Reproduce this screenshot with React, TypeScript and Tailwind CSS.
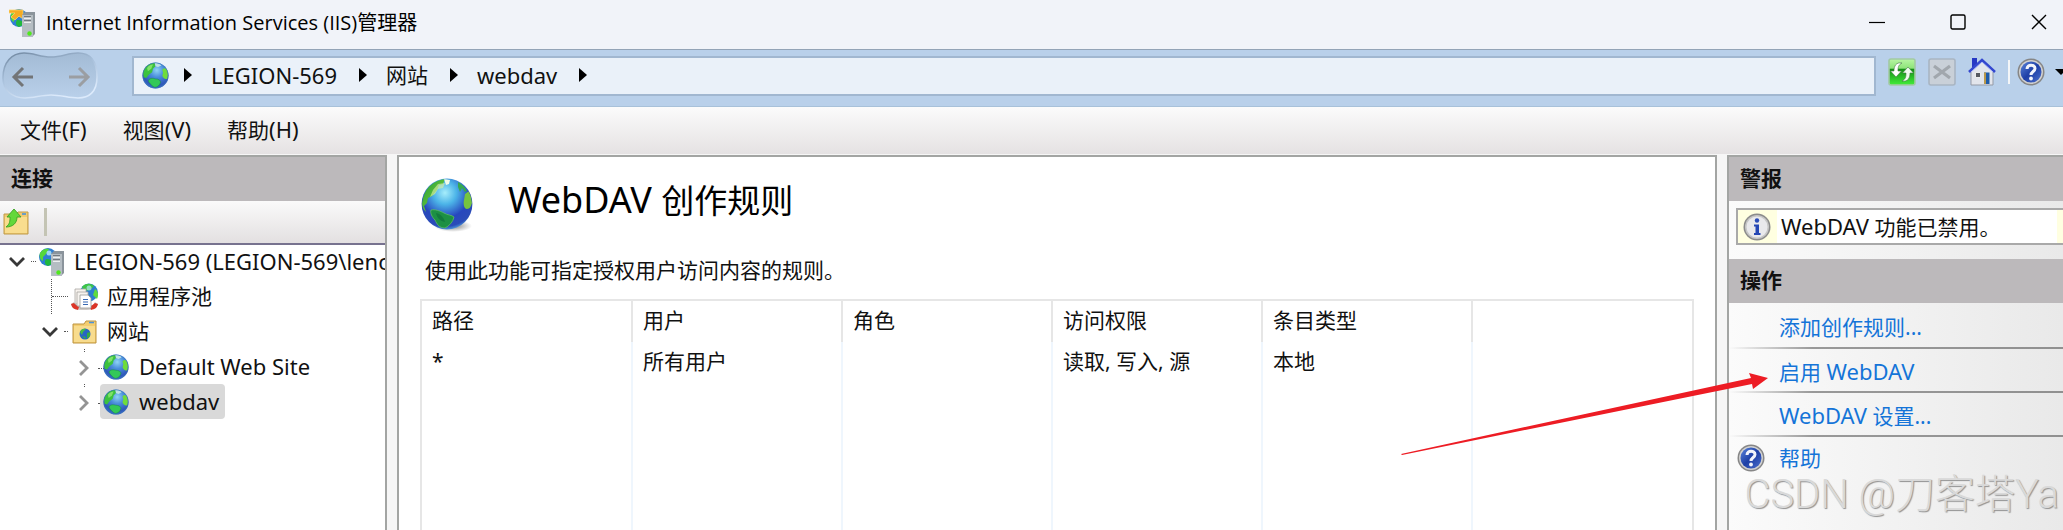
import React from 'react';

function Globe({ className = 'size-[26px]' }: { className?: string }) {
  return (
    <svg viewBox="0 0 32 32" className={className} aria-hidden="true">
      <defs>
        <radialGradient id="sea" cx=".55" cy=".3" r=".75">
          <stop offset="0" stopColor="#8fd4f4" />
          <stop offset=".35" stopColor="#4b8fdc" />
          <stop offset=".75" stopColor="#2f57ba" />
          <stop offset="1" stopColor="#3d7dcc" />
        </radialGradient>
        <clipPath id="disc"><circle cx="16" cy="16" r="15" /></clipPath>
      </defs>
      <circle cx="16" cy="16" r="15.500" fill="url(#sea)" />
      <g clipPath="url(#disc)">
        <path d="M1 12C2 5 8 1 15 1l1 4-3 3-1 4-4 3-3 4-3-1Z" fill="#3cc23e" />
        <path d="M6 7c2-3 5-4 7-4l-2 5-4 3Z" fill="#9df07c" opacity=".7" />
        <path d="M15 1c3 0 6 1 8 3l-4 2-3-1Z" fill="#d4f0e4" opacity=".8" />
        <path d="M24 9c2-2 4-2 6 0 1 4 1 8 0 11-3 1-5-1-6-4l1-3Z" fill="#6fdc3a" />
        <path d="M8 21c2-2 5-2 8-1 4 0 6 2 6 4-1 4-4 6-7 6-3-1-4-3-6-5-1-1-2-3-1-4Z" fill="#33c858" stroke="#178a48" strokeWidth=".6" />
      </g>
      <circle cx="16" cy="16" r="15" fill="none" stroke="#3b74b4" strokeWidth=".6" />
    </svg>
  );
}

function LargeGlobe() {
  return (
    <svg viewBox="0 0 52 54" className="h-[54px] w-[52px] shrink-0" aria-hidden="true">
      <defs>
        <radialGradient id="ocean" cx=".46" cy=".28" r=".75">
          <stop offset="0" stopColor="#a6edfb" />
          <stop offset=".3" stopColor="#4cb4e8" />
          <stop offset=".65" stopColor="#2747bd" />
          <stop offset=".88" stopColor="#2b4cb8" />
          <stop offset="1" stopColor="#58b4e6" />
        </radialGradient>
        <linearGradient id="land" x1="0" y1="0" x2="1" y2="1">
          <stop offset="0" stopColor="#1f9c3a" />
          <stop offset="1" stopColor="#8fd83a" />
        </linearGradient>
        <radialGradient id="shade">
          <stop offset="0" stopColor="#555" stopOpacity=".8" />
          <stop offset="1" stopColor="#777" stopOpacity="0" />
        </radialGradient>
        <clipPath id="ball"><circle cx="26" cy="26" r="25" /></clipPath>
      </defs>
      <ellipse cx="32" cy="48" rx="19" ry="6" fill="url(#shade)" />
      <circle cx="26" cy="26" r="25.400" fill="url(#ocean)" />
      <g clipPath="url(#ball)">
        <path d="M2 20C5 9 13 1 24 1l-2 5-4 1-2 5-5 6-4 2-1 5-3 3 2 6C1 30 0 26 2 20Z" fill="url(#land)" />
        <path d="m12 12 5-6 7-1-2 5-5 1-3 5-5 3Z" fill="#d6eea2" opacity=".65" />
        <path d="m23 1 6 1-1 4-3 1Z" fill="#f3fbe9" />
        <path d="M37 4c4 2 7 5 9 9l-2 1-3-4-2 4-2-5Z" fill="#35a950" />
        <path d="m44 16 4-3c2 3 3 7 3 12-1 3-2 6-5 6s-4-5-3-9Z" fill="#76c440" />
        <path d="M10 32c4-1 9 1 13 3 3 2 8 2 10 4-1 5-5 9-9 11-6 0-8-4-10-8-3-3-5-7-4-10Z" fill="#1d9044" stroke="#65c85c" strokeWidth=".7" />
        <path d="M15 35c5 1 8 5 9 9-5-1-8-4-9-9Z" fill="#0d6c38" opacity=".6" />
      </g>
    </svg>
  );
}

function Server({ badge = false }: { badge?: boolean }) {
  return (
    <svg viewBox="0 0 28 28" className="size-7 shrink-0" aria-hidden="true">
      <circle cx="10" cy="9" r="9" fill="#2f7fd3" />
      <path d="M2 5c2-4 7-5 9-4L8 6 5 9v4C2 12 1 8 2 5Z" fill="#55d83c" />
      <path d="M8 11c4 0 7 1 6 5l-4 2c-3-1-4-4-2-7Z" fill="#20b83e" />
      <circle cx="11" cy="5" r="2.500" fill="#b9ecfb" opacity=".8" />
      {badge && <path d="M0 1h14v9l-4-3-4 4-4-3 4-4H0Z" fill="#f5ab22" stroke="#fbd36b" strokeWidth=".8" />}
      <path d="m13 6 3-3h10v22l-3 3H13Z" fill="#8b949c" />
      <path d="M13 6h11v22H13Z" fill="#b5bdc3" />
      <path d="M15 9h7M15 13h7" stroke="#fff" strokeWidth="1.600" />
      <path d="M15 7.800h7M15 11.800h7" stroke="#555d64" strokeWidth="1" />
      <circle cx="20.500" cy="24.500" r="2.200" fill="#4fe81d" />
    </svg>
  );
}

function Pools() {
  return (
    <svg viewBox="0 0 28 28" className="size-7 shrink-0" aria-hidden="true">
      <circle cx="18" cy="9.500" r="9" fill="#2e7fd0" />
      <path d="M11 4c3-4 9-4 12-1l-4 4-6 1Z" fill="#3ec546" />
      <path d="M24 6c3 2 4 6 2 10l-4-4Z" fill="#5fda3e" />
      <circle cx="18" cy="5" r="2.500" fill="#b5e8ee" opacity=".7" />
      <path d="M0 21c1 5 5 6 13 6s13-2 14-6l-3-2-2 3H5l-2-3Z" fill="#cfcac6" />
      <path d="m0 21 3-1 5 4-1 3c-4-1-6-2-7-6ZM27 21l-3-1-5 4 1 3c4-1 6-2 7-6Z" fill="#dc3527" />
      <path d="M4 6h11v15H4Z" fill="#f7f3ee" stroke="#a9a6a2" strokeWidth=".8" />
      <path d="M6 9h11v14H6Z" fill="#f6f3ef" stroke="#a9a6a2" strokeWidth=".8" />
      <path d="M9 12h8l3 3v10H9Z" fill="#fff" stroke="#9a9a98" strokeWidth=".8" />
      <path d="M12 16.500h5M12 19h5M12 21.500h5" stroke="#3769b4" strokeWidth="1.200" />
    </svg>
  );
}

function SitesFolder() {
  return (
    <svg viewBox="0 0 28 28" className="size-7 shrink-0" aria-hidden="true">
      <path d="M2 6h11l2-3h10v22H2Z" fill="#f3cd70" stroke="#bd9440" strokeWidth="1" />
      <path d="M3 8h21v16H3Z" fill="#f8dc8e" />
      <path d="M18 4.500h5" stroke="#4a92db" strokeWidth="1.500" />
      <circle cx="14" cy="16" r="5.500" fill="#2765c4" />
      <path d="M9 14c1-3 4-4 6-3l-3 3-1 3Z" fill="#44bd44" />
      <path d="m16 15 3-1v4l-3 3Zm-5 3 4 1-1 2Z" fill="#36ad42" />
    </svg>
  );
}

function UpFolder() {
  return (
    <svg viewBox="0 0 28 28" className="size-7" aria-hidden="true">
      <path d="M2 6h12l2-2h10v22H2Z" fill="#f0ca70" stroke="#bf9a48" strokeWidth="1" />
      <path d="M3 9h22v16H3Z" fill="#f9dd8e" />
      <path d="M20 6h4" stroke="#4a92db" strokeWidth="1.600" />
      <path d="M4 19c4-3 4-6 4-10H5l7-8 7 8h-4c0 6-4 10-11 10Z" fill="#63d83a" stroke="#3ba322" strokeWidth=".9" />
    </svg>
  );
}

function Help() {
  return (
    <svg viewBox="0 0 28 28" className="size-7 shrink-0" aria-hidden="true">
      <defs>
        <linearGradient id="help" x1="0" y1="0" x2="1" y2="1">
          <stop offset="0" stopColor="#5d86dc" />
          <stop offset=".5" stopColor="#1d3fa6" />
          <stop offset="1" stopColor="#4d70cc" />
        </linearGradient>
      </defs>
      <circle cx="14" cy="14" r="13.500" fill="#868686" />
      <circle cx="14" cy="14" r="12" fill="#d0d0d0" />
      <circle cx="14" cy="14" r="10.500" fill="url(#help)" />
      <path d="M10 11c0-5 8-5 8-.5 0 3-4 3-4 6.500" fill="none" stroke="#f2f4fb" strokeWidth="3" />
      <circle cx="14" cy="20.500" r="1.900" fill="#f2f4fb" />
    </svg>
  );
}

function Info() {
  return (
    <svg viewBox="0 0 28 28" className="size-7 shrink-0" aria-hidden="true">
      <circle cx="14" cy="14" r="13.500" fill="#8b8b8b" />
      <circle cx="14" cy="14" r="12" fill="#c6c6c6" />
      <circle cx="14" cy="14" r="10.500" fill="#e9e9ec" />
      <circle cx="14" cy="7.500" r="2.200" fill="#2a4cb8" />
      <path d="M11 11.500h5V20h1.500v2h-6.500v-2h1.500v-6.500H11Z" fill="#2446b4" />
    </svg>
  );
}

const Chevron = ({ open }: { open?: boolean }) => (
  <svg viewBox="0 0 16 16" className="size-4 shrink-0" aria-hidden="true">
    {open ? (
      <path d="m1 4 7 7 7-7" fill="none" stroke="#383838" strokeWidth="2.800" />
    ) : (
      <path d="m4 1 7 7-7 7" fill="none" stroke="#949494" strokeWidth="2.800" />
    )}
  </svg>
);

const Dots = () => <span className="w-[6px] border-t border-dotted border-[#555]" />;

function Crumb({ children }: { children?: React.ReactNode }) {
  return (
    <span className="flex items-center gap-[19px]">
      <svg viewBox="0 0 8 14" className="h-[14px] w-2 shrink-0" aria-hidden="true">
        <path d="m0 0 8 7-8 7Z" fill="#000" />
      </svg>
      {children}
    </span>
  );
}

function PanelTitle({ children }: { children: React.ReactNode }) {
  return (
    <h2 className="flex h-11 shrink-0 items-center bg-[#bcb9bb] pb-[2px] pl-[11px] text-[21px] font-bold">{children}</h2>
  );
}

const columns = ['路径', '用户', '角色', '访问权限', '条目类型'];
const rule = ['*', '所有用户', '', '读取, 写入, 源', '本地'];
const Latin = ({ children }: { children: React.ReactNode }) => <span className="text-[22px]">{children}</span>;

export default function App() {
  const actions = [
    <>添加创作规则...</>,
    <>启用 <Latin>WebDAV</Latin></>,
    <><Latin>WebDAV</Latin> 设置...</>,
  ];
  return (
    <div className="relative flex h-screen flex-col overflow-hidden bg-[#f6f6f6] font-['Noto_Sans','Noto_Sans_CJK_SC',sans-serif] text-[21px] leading-7 text-[#111]">
      <header className="flex h-[50px] shrink-0 items-center justify-between border-b border-[#93a3b7] bg-[#f1f3f9] pr-4 pb-[4px] pl-[9px]">
        <div className="flex items-center gap-[9px]">
          <Server badge />
          <h1 className="font-['Open_Sans','Noto_Sans_CJK_SC',sans-serif] text-[20px] text-black">
            Internet Information Services (IIS)管理器
          </h1>
        </div>
        <div className="flex items-center gap-[65px] pb-[2px]">
          <button aria-label="最小化" className="size-4">
            <svg viewBox="0 0 16 16"><path d="M0 8.500h16" stroke="#000" strokeWidth="1.200" /></svg>
          </button>
          <button aria-label="最大化" className="size-4">
            <svg viewBox="0 0 16 16"><rect x="1" y="1" width="14" height="14" rx="1.500" fill="none" stroke="#000" strokeWidth="1.400" /></svg>
          </button>
          <button aria-label="关闭" className="size-4">
            <svg viewBox="0 0 16 16"><path d="m1 1 14 14M15 1 1 15" stroke="#000" strokeWidth="1.400" /></svg>
          </button>
        </div>
      </header>

      <div className="flex h-[57px] shrink-0 items-start overflow-hidden border-b border-[#a8c1d9] bg-[#b9d0ea] pt-[6px]">
        <div className="-mt-1 flex h-12 w-[132px] shrink-0">
          <svg viewBox="0 0 132 48" className="h-12 w-[132px]" aria-hidden="true">
            <defs>
              <linearGradient id="pill" x1="0" y1="0" x2="0" y2="1">
                <stop offset="0" stopColor="#a3bbd5" />
                <stop offset="1" stopColor="#b9d0ea" />
              </linearGradient>
              <linearGradient id="rim" x1="0" y1="0" x2=".5" y2="1">
                <stop offset="0" stopColor="#6f869f" />
                <stop offset=".5" stopColor="#a9c1dc" />
                <stop offset="1" stopColor="#dceafb" />
              </linearGradient>
            </defs>
            <path d="M3 26C3 10 12 1 24 1c10 0 16 4 27 4S68 1 78 1c13 0 19 9 19 24S89 46 78 46c-9 0-17-3-27-3s-17 3-26 3C12 46 3 38 3 26Z" fill="url(#pill)" stroke="url(#rim)" strokeWidth="1.600" />
            <path d="M33 25H14m9-9-9 9 9 9" fill="none" stroke="#737577" strokeWidth="3" />
            <path d="M69 25h19m-9-9 9 9-9 9" fill="none" stroke="#9b9ea2" strokeWidth="3" />
          </svg>
        </div>
        <nav aria-label="地址" className="flex h-10 min-w-0 flex-1 items-center border-2 border-[#a1b7d0] bg-[#eaf1f9] pb-[2px] pl-2 text-[22px]">
          <Globe className="mr-[15px] size-[27px]" />
          <div className="flex items-center gap-[22px]">
            <Crumb><a href="#server">LEGION-569</a></Crumb>
            <Crumb><a href="#sites" className="text-[21px]">网站</a></Crumb>
            <Crumb><a href="#webdav">webdav</a></Crumb>
            <Crumb />
          </div>
        </nav>
        <div className="flex w-[187px] shrink-0 items-center gap-3 pt-[2px] pl-3">
          <button aria-label="刷新" className="size-7 shrink-0">
            <svg viewBox="0 0 28 28">
              <defs>
                <linearGradient id="green" x1="0" y1="0" x2="0" y2="1">
                  <stop offset="0" stopColor="#b8f5a4" />
                  <stop offset=".35" stopColor="#8ee47a" />
                  <stop offset=".4" stopColor="#168f18" />
                  <stop offset="1" stopColor="#42ee3a" />
                </linearGradient>
              </defs>
              <rect x="1" y="1" width="26" height="26" rx="2" fill="url(#green)" stroke="#a2c9a4" strokeWidth="1.600" />
              <path d="M14 5C8 4 6 8 6 13H2.500l5.500 6 5.500-6H10c0-3 0-6 4-8Z" fill="#fff" stroke="#407a40" strokeWidth=".6" />
              <path d="M14 23c6 1 8-3 8-8h3.500L20 9l-5.500 6H18c0 3 0 6-4 8Z" fill="#f1fbef" stroke="#407a40" strokeWidth=".6" />
            </svg>
          </button>
          <button aria-label="停止" disabled className="size-7 shrink-0">
            <svg viewBox="0 0 28 28">
              <rect x="1" y="1" width="26" height="26" rx="2" fill="#c9d0d8" stroke="#a9b5c2" strokeWidth="1.600" />
              <path d="m6 8 16 12M22 8 6 20" stroke="#a1a7ad" strokeWidth="3.200" />
            </svg>
          </button>
          <button aria-label="主页" className="size-7 shrink-0">
            <svg viewBox="0 0 28 28">
              <path d="M4 0h5v10H4Z" fill="#2638c4" />
              <path d="M3 13 14 3l11 10v14H3Z" fill="#e2e5ec" stroke="#9499a6" strokeWidth="1" />
              <path d="M1 14 14 2l13 12" fill="none" stroke="#3347cf" strokeWidth="2.600" />
              <path d="M3 14 14 4l11 10" fill="none" stroke="#a7b5f5" strokeWidth="1" />
              <path d="M7.500 14.500h5v5h-5Z" fill="#565a61" stroke="#fff" strokeWidth=".8" />
              <path d="M16 14.500h5.500V26H16Z" fill="#1f5ba8" />
              <path d="M16 14.500h2V26h-2Z" fill="#b9984b" />
            </svg>
          </button>
          <span className="h-6 w-[2px] shrink-0 bg-[#f4f6f8]" />
          <button aria-label="帮助" className="-ml-[5px] flex shrink-0 items-center gap-[10px]">
            <Help />
            <svg viewBox="0 0 12 6" className="h-[6px] w-3" aria-hidden="true"><path d="M0 0h12L6 6Z" fill="#000" /></svg>
          </button>
        </div>
      </div>

      <nav aria-label="菜单" className="flex h-[47px] shrink-0 items-center gap-[36px] bg-linear-to-b from-[#fbfbfb] to-[#e5e2e3] px-5 pb-[2px]">
        <button>文件<Latin>(F)</Latin></button>
        <button>视图<Latin>(V)</Latin></button>
        <button>帮助<Latin>(H)</Latin></button>
      </nav>

      <main className="flex min-h-0 flex-1 gap-[10px] pt-[1px]">
        <aside className="flex w-[387px] shrink-0 flex-col overflow-hidden border-t-2 border-r-2 border-[#a3a5a3] bg-white">
          <PanelTitle>连接</PanelTitle>
          <div className="flex h-11 shrink-0 items-center gap-[14px] border-b-2 border-[#77728f] bg-linear-to-b from-[#fafafa] to-[#e3e0e1] pl-[2px]">
            <button aria-label="向上"><UpFolder /></button>
            <span className="h-7 w-[3px] bg-[#c4c4b4]" />
          </div>
          <ul className="-mt-[1px] text-[22px] whitespace-nowrap">
            <li className="flex h-[35px] items-center">
              <span className="flex w-9 shrink-0 items-center gap-[6px] pl-[9px]"><Chevron open /><Dots /></span>
              <button className="flex items-center gap-2 pl-[2px]"><Server /><span className="pb-[2px]">LEGION-569 (LEGION-569\lenovo)</span></button>
            </li>
            <li className="flex h-[35px] items-center text-[21px]">
              <span className="flex h-full w-[68px] shrink-0 items-center pl-[51px]">
                <span className="h-full border-l border-dotted border-[#555]" />
                <span className="flex-1 border-t border-dotted border-[#555]" />
              </span>
              <button className="flex items-center gap-2 pl-[3px]"><Pools /><span className="pb-[2px]">应用程序池</span></button>
            </li>
            <li className="flex h-[35px] items-center text-[21px]">
              <span className="flex w-[68px] shrink-0 items-center gap-[6px] pl-[42px]"><Chevron open /><Dots /></span>
              <button className="flex items-center gap-2 pl-[3px]"><SitesFolder /><span className="pb-[2px]">网站</span></button>
            </li>
            {['Default Web Site', 'webdav'].map((site) => (
              <li key={site} className="flex h-[35px] items-center">
                <span className="flex h-full w-[100px] shrink-0 flex-col items-start pl-[76px]">
                  <span className="ml-2 h-[3px] border-l border-dotted border-[#555]" />
                  <span className="flex flex-1 items-center gap-[6px]"><Chevron /><Dots /></span>
                </span>
                <button className={site === 'webdav' ? 'flex h-full items-center gap-[10px] rounded-sm bg-[#d9d9d9] pr-[6px] pl-[3px]' : 'flex items-center gap-[10px] pl-[3px]'}>
                  <Globe /><span className="pb-[2px]">{site}</span>
                </button>
              </li>
            ))}
          </ul>
        </aside>

        <section className="flex min-w-0 flex-1 flex-col border-x-2 border-t-2 border-[#a3a5a3] bg-white px-[21px]">
          <div className="flex items-center gap-[35px] pt-5 pl-[1px]">
            <LargeGlobe />
            <h2 className="pb-2 text-[36px] leading-[46px] text-black">WebDAV <span className="text-[33px]">创作规则</span></h2>
          </div>
          <p className="mt-6 mb-[15px] pl-[5px]">使用此功能可指定授权用户访问内容的规则。</p>
          <div className="flex min-h-0 flex-1 border-x-2 border-t-2 border-[#e6e6e6]">
            <table className="h-full w-full table-fixed border-collapse text-left">
              <colgroup>
                {columns.map((c) => <col key={c} className="w-[210px]" />)}
                <col />
              </colgroup>
              <thead>
                <tr className="h-[41px]">
                  {columns.map((c) => (
                    <th key={c} className="border-r-2 border-[#e6e6e6] pb-[3px] pl-[10px] font-normal">{c}</th>
                  ))}
                  <td />
                </tr>
              </thead>
              <tbody>
                <tr className="h-[40px]">
                  {rule.map((v, i) => <td key={i} className="border-r-2 border-[#eff6fd] pb-[3px] pl-[10px]">{v}</td>)}
                  <td />
                </tr>
                <tr>
                  {rule.map((_, i) => <td key={i} className="border-r-2 border-[#eff6fd]" />)}
                  <td />
                </tr>
              </tbody>
            </table>
          </div>
        </section>

        <aside className="flex w-[336px] shrink-0 flex-col overflow-hidden border-t-2 border-l-2 border-[#a3a5a3] bg-linear-to-r from-[#fbfbfb] to-[#e9e9e9]">
          <PanelTitle>警报</PanelTitle>
          <div className="mt-[7px] mb-[14px] ml-[7px] flex h-[37px] shrink-0 items-center gap-[6px] border-y-2 border-l-2 border-[#a9a9a9] bg-[#ffffe1] pr-[6px] pl-[5px]">
            <Info />
            <p className="flex h-full flex-1 items-center bg-white pl-1"><span><Latin>WebDAV</Latin> 功能已禁用。</span></p>
          </div>
          <PanelTitle>操作</PanelTitle>
          <ul className="pt-[2px] text-[#1474d8]">
            {actions.map((a, i) => (
              <li key={i}>
                <a href="#action" className="block h-[42px] pt-2 pl-[50px]">{a}</a>
                <div className="h-[2px] bg-linear-to-r from-transparent via-[#999] via-25% to-[#909090]" />
              </li>
            ))}
            <li>
              <a href="#help" className="flex h-[42px] items-center gap-[14px] pl-2"><Help />帮助</a>
            </li>
          </ul>
        </aside>
      </main>

      <svg viewBox="0 0 368 84" className="pointer-events-none absolute top-[372px] right-[294px] h-[84px] w-[368px]" aria-hidden="true">
        <path d="m0 82 350-76-2-5 19 5-15 11-1-5L1 83Z" fill="#ed1c24" />
      </svg>
      <p className="pointer-events-none absolute right-1 bottom-3 font-['Roboto','Noto_Sans_CJK_SC',sans-serif] text-[40px] leading-[46px] font-light whitespace-nowrap text-[#d9d9d9] [text-shadow:1px_1px_1px_#929292]">
        CSDN @刀客塔Ya
      </p>
    </div>
  );
}
